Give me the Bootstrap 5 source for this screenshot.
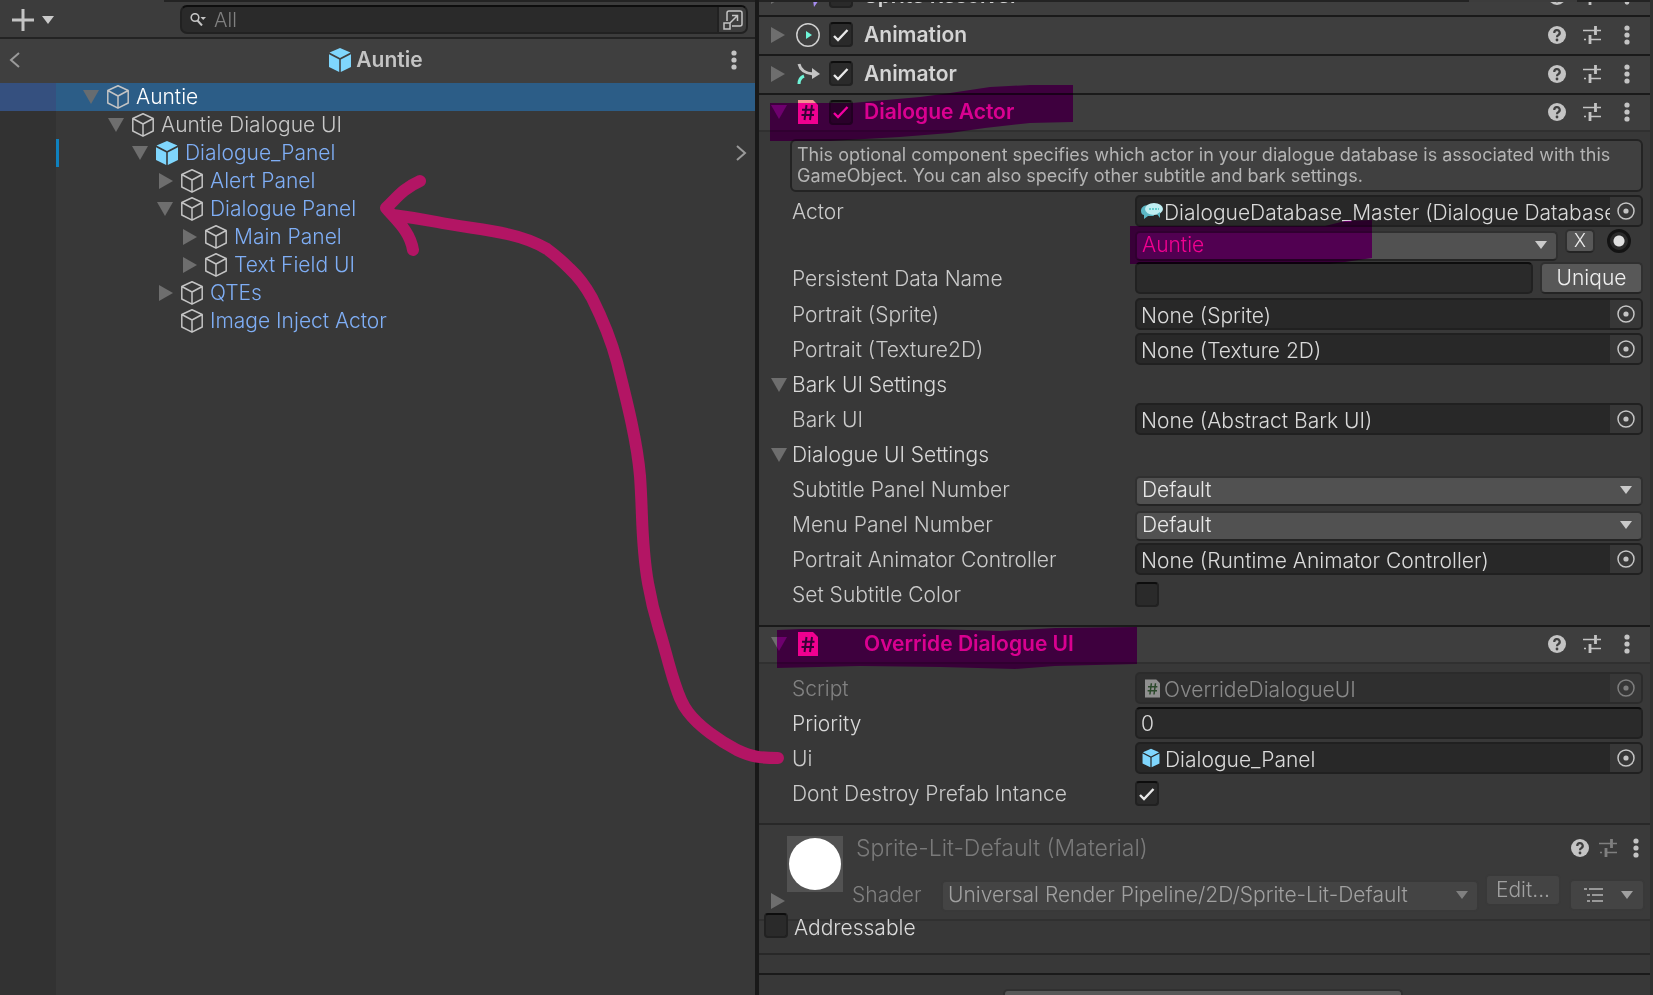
<!DOCTYPE html>
<html lang="en">
<head>
<meta charset="utf-8">
<meta name="viewport" content="width=device-width, initial-scale=1">
<title>Auntie – Inspector</title>
<link href="https://cdn.jsdelivr.net/npm/bootstrap@5.3.0/dist/css/bootstrap.min.css" rel="stylesheet">
<style>
  body { background: #383838; color: #cacaca; font-family: Inter, "Liberation Sans", sans-serif; font-size: 21px; font-weight: 300; line-height: 32px; overflow: hidden; }
  button, input, select { font: inherit; color: inherit; }
  svg { display: block; flex: none; }
  .editor { min-height: 100vh; }
  .hierarchy { flex: 755 1 0; min-width: 0; }
  .inspector { flex: 891 1 0; min-width: 0; border-right: 3px solid #303030; box-sizing: content-box; }
  .splitter { width: 4px; background: #191919; }
  .plain { background: none; border: 0; padding: 0; display: flex; align-items: center; }
  .tabline { height: 2px; background: #232323; }
  .tabline span { background: #3c3c3c; }

  /* hierarchy */
  .toolbar { height: 37px; background: #3c3c3c; border-bottom: 2px solid #232323; padding: 0 7px 0 12px; }
  .toolbar .add { width: 168px; gap: 8px; }
  .searchbox { height: 29px; background: #2a2a2a; border: 2px solid #212121; border-top-color: #0d0d0d; border-radius: 7px; overflow: hidden; }
  .searchbox input { background: none; border: 0; outline: 0; padding: 0; font-size: 20px; line-height: 24px; }
  .searchbox input::placeholder { color: #808080; opacity: 1; }
  .searchbox .expand { width: 29px; height: 100%; background: #3c3c3c; border-left: 2px solid #212121; }
  .crumb { height: 44px; background: #3f3f3f; padding: 0 18px 2px 9px; }
  .crumb h1 { font-size: 21px; font-weight: 600; line-height: 32px; color: #c4c4c4; }
  .tree { background: #383838; }
  .gutter-strip { width: 56px; background: #323232; }
  .gutter-strip div { height: 28px; background: #35507f; }
  .node { height: 28px; line-height: 28px; color: #7faef5; }
  .node a { color: inherit; text-decoration: none; }
  .node .twist { width: 18px; margin-right: 5px; }
  .node .twist svg[width="14"] { margin-left: 2px; }
  .node .cube { margin-right: 6px; }
  .node.selected { background: #2c5d87; color: #fff; }
  .node.scene { color: #c8c8c8; }
  .node.changed { box-shadow: inset 3px 0 #0f81be; }
  .lv0 { padding-left: 27px; } .lv1 { padding-left: 52px; } .lv2 { padding-left: 76px; }
  .lv3 { padding-left: 101px; } .lv4 { padding-left: 125px; }

  /* inspector */
  .comp-head { height: 39px; background: #3e3e3e; border-bottom: 2px solid #1a1a1a; padding: 0 14px 2px 12px; position: relative; }
  .comp-head.open { height: 37px; border-bottom-color: #303030; padding-bottom: 1px; }
  .comp-head h2 { font-size: 21px; font-weight: 600; line-height: 32px; color: #d4d4d4; margin: 0 0 0 11px; }
  .comp-head .fold { width: 25px; }
  .comp-head .kind { width: 24px; margin-right: 9px; }
  .marked h2 { color: #d98090; }
  .actions { gap: 17px; }
  .peek { height: 15px; overflow: hidden; }
  .section { border-bottom: 2px solid #1a1a1a; }
  .helpbox { margin: 7px 7px 3px 31px; padding: 3px 5px; border: 2px solid #232323; border-radius: 6px; background: #404040; font-size: 18px; font-weight: 400; line-height: 21px; height: 53px; color: #b4b4b4; white-space: nowrap; }
  .prop { height: 35px; padding: 0 7px 0 33px; position: relative; display: flex; align-items: flex-start; }
  .prop > label, .prop > .name { width: 343px; flex: none; white-space: nowrap; }
  .prop > label, .prop > .strong { line-height: 34px; }
  .prop .strong { color: #d8d8d8; }
  .prop .fold { width: 16px; height: 34px; margin-left: -21px; margin-right: 5px; }
  .objfield, .textfield { height: 32px; flex: 1 1 0; min-width: 0; background: #282828; border: 2px solid #202020; border-radius: 5px; color: #dadada; overflow: hidden; }
  .objfield input { flex: 1 1 0; min-width: 0; background: none; border: 0; outline: 0; padding: 2px 0 0 4px; line-height: 26px; height: 28px; }
  .objfield input.withicon { padding-left: 1px; }
  .objfield .pick { width: 31px; height: 28px; background: #373737; justify-content: center; }
  .textfield { background: #2a2a2a; border-color: #212121; border-top-color: #0d0d0d; padding: 0 4px; line-height: 28px; outline: 0; }
  .off { opacity: .5; }
  .drop { position: relative; flex: 1 1 0; min-width: 0; margin-top: 1px; }
  .drop select { width: 100%; height: 30px; appearance: none; background: #515151; border: 2px solid #303030; border-bottom-color: #242424; border-radius: 5px; padding: 0 30px 2px 5px; line-height: 24px; color: #e8e8e8; outline: 0; }
  .drop svg { position: absolute; right: 11px; top: 12px; pointer-events: none; }
  .pushbtn { background: #585858; border: 2px solid #303030; border-bottom-color: #242424; border-radius: 5px; color: #eee; padding: 0; text-align: center; }
  .tick { appearance: none; flex: none; width: 24px; height: 25px; margin: 0; background: #2a2a2a; border: 2px solid #212121; border-top-color: #0d0d0d; border-radius: 4px; }
  .tick:checked { background: #2a2a2a url("data:image/svg+xml,%3Csvg xmlns='http://www.w3.org/2000/svg' viewBox='0 0 20 20'%3E%3Cpath d='M3 11l4 4L16.500 5' fill='none' stroke='%23e8e8e8' stroke-width='2.400'/%3E%3C/svg%3E") center / 20px no-repeat; }
  .marked .tick:checked { background-image: url("data:image/svg+xml,%3Csvg xmlns='http://www.w3.org/2000/svg' viewBox='0 0 20 20'%3E%3Cpath d='M3 11l4 4L16.500 5' fill='none' stroke='%23f080a0' stroke-width='2.400'/%3E%3C/svg%3E"); }
  .prop .tick { margin-top: 4px; }
  .dot { appearance: none; width: 24px; height: 24px; margin: 0; border-radius: 50%; border: 3px solid #131313; background: radial-gradient(circle, #e0e0e0 5px, #2a2a2a 6px); }
  .marker { position: absolute; mix-blend-mode: multiply; pointer-events: none; z-index: 2; }
  .material { height: 96px; background: #3a3a3a; border-bottom: 2px solid #303030; padding: 0 5px 0 12px; color: #808080; }
  .material .preview { width: 56px; height: 56px; background: #525252; }
  .material .preview span { width: 52px; height: 52px; background: #fff; border-radius: 50%; }
  .material h2 { font-size: 23px; font-weight: 300; line-height: 32px; margin: 0; color: #7a7a7a; }
  .material .drop select, .material .pushbtn { background: #444; border-color: #393939; color: #a0a0a0; height: 32px; }
  .addr { margin-top: -8px; padding: 0 0 15px 5px; gap: 6px; height: 40px; color: #dadada; position: relative; }
  .addr label { line-height: 30px; }
  .wide { width: 400px; height: 32px; margin: 14px auto 0 244px; display: block; }
  .annotation { position: absolute; left: 0; top: 0; width: 100%; pointer-events: none; z-index: 3; }
</style>
</head>
<body>
<svg width="0" height="0" class="position-absolute" aria-hidden="true">
  <defs>
    <symbol id="cube" viewBox="0 0 24 26"><path d="M12 1.800L22.200 6.500V19L12 24.200L1.800 19V6.500Z M1.800 6.500L12 12L22.200 6.500M12 12V24" fill="none" stroke="#c4c4c4" stroke-width="1.500" stroke-linejoin="round"/></symbol>
    <symbol id="prefab" viewBox="0 0 24 26"><path d="M12 1L22.500 5.600L12 11L1.500 5.600Z M1 7.200L11.200 12.500V25L1 20Z M23 7.200L12.800 12.500V25L23 20Z" fill="#7fd6fd"/></symbol>
    <symbol id="down" viewBox="0 0 16 14"><path d="M0 0H16L8 14Z" fill="#6e6e6e"/></symbol>
    <symbol id="right" viewBox="0 0 14 16"><path d="M0 0L14 8L0 16Z" fill="#6e6e6e"/></symbol>
    <symbol id="caret" viewBox="0 0 12 8"><path d="M0 0H12L6 8Z" fill="currentColor"/></symbol>
    <symbol id="help" viewBox="0 0 18 18"><circle cx="9" cy="9" r="9" fill="#c4c4c4"/><path d="M6.300 7A2.700 2.700 0 1 1 10.500 9Q9 9.800 9 11.200" fill="none" stroke="#3e3e3e" stroke-width="2.200"/><circle cx="9" cy="14" r="1.400" fill="#3e3e3e"/></symbol>
    <symbol id="preset" viewBox="0 0 18 18"><path d="M0 4.500H12M14 4.500H18M1 13.500H3M7 13.500H18" stroke="#c4c4c4" stroke-width="1.400"/><path d="M12.500 0V9M7 9V18" stroke="#c4c4c4" stroke-width="2.800"/></symbol>
    <symbol id="kebab" viewBox="0 0 6 20"><circle cx="3" cy="3" r="2.600" fill="#c4c4c4"/><circle cx="3" cy="10" r="2.600" fill="#c4c4c4"/><circle cx="3" cy="17" r="2.600" fill="#c4c4c4"/></symbol>
    <symbol id="picker" viewBox="0 0 18 18"><circle cx="9" cy="9" r="8" fill="none" stroke="#c4c4c4" stroke-width="1.500"/><circle cx="9" cy="9" r="2.600" fill="#c4c4c4"/></symbol>
    <symbol id="script" viewBox="0 0 20 24"><path d="M0 0H15L20 5V24H0Z" fill="currentColor"/><path d="M8.500 5L6.500 20M14 5L12 20M4 9.700H16.500M3.500 15H16" stroke="var(--hash)" stroke-width="2"/></symbol>
  </defs>
</svg>

<main class="editor d-flex position-relative">
  <section class="hierarchy d-flex flex-column" aria-label="Hierarchy">
    <div class="tabline d-flex"><span style="width:164px"></span></div>
    <div class="toolbar d-flex align-items-center">
      <div class="add d-flex align-items-center">
        <button class="plain" aria-label="Create" style="gap:8px">
          <svg width="22" height="22" viewBox="0 0 22 22"><path d="M11 0V22M0 11H22" stroke="#c4c4c4" stroke-width="3"/></svg>
          <svg width="12" height="8"><use href="#caret"/></svg>
        </button>
      </div>
      <div class="searchbox d-flex align-items-center flex-fill ps-2">
        <svg width="16" height="13" viewBox="0 0 16 13"><circle cx="5" cy="4.500" r="3.800" fill="none" stroke="#c4c4c4" stroke-width="1.600"/><path d="M7.500 7.500L12 12.500" stroke="#c4c4c4" stroke-width="2"/><path d="M10.500 4H16L13.200 7Z" fill="#c4c4c4"/></svg>
        <input class="flex-fill ms-2" type="text" placeholder="All" aria-label="Search hierarchy">
        <button class="plain expand justify-content-center" aria-label="Open search window">
          <svg width="22" height="22" viewBox="0 0 22 22"><path d="M5 12V4Q5 2 7 2H18Q20 2 20 4V15Q20 17 18 17H10" fill="none" stroke="#c4c4c4" stroke-width="1.500"/><path d="M2 14H8V20H2ZM8 14L15 7M10 6.500H15.500V12" fill="none" stroke="#c4c4c4" stroke-width="1.500"/></svg>
        </button>
      </div>
    </div>
    <div class="crumb d-flex align-items-center justify-content-between">
      <button class="plain" aria-label="Back"><svg width="11" height="16" viewBox="0 0 11 16"><path d="M10 1L2 8L10 15" fill="none" stroke="#9a9a9a" stroke-width="2"/></svg></button>
      <h1 class="d-flex align-items-center gap-1 m-0"><svg width="24" height="26"><use href="#prefab"/></svg>Auntie</h1>
      <button class="plain" aria-label="Menu"><svg width="6" height="20"><use href="#kebab"/></svg></button>
    </div>
    <div class="tree d-flex flex-fill">
      <div class="gutter-strip"><div></div></div>
      <div class="flex-fill">
        <div class="node selected lv0 d-flex align-items-center"><span class="twist"><svg width="16" height="14" opacity=".9"><use href="#down"/></svg></span><svg class="cube" width="24" height="26"><use href="#cube"/></svg><a href="#">Auntie</a></div>
        <div class="node scene lv1 d-flex align-items-center"><span class="twist"><svg width="16" height="14"><use href="#down"/></svg></span><svg class="cube" width="24" height="26"><use href="#cube"/></svg><a href="#">Auntie Dialogue UI</a></div>
        <div class="node changed lv2 d-flex align-items-center"><span class="twist"><svg width="16" height="14"><use href="#down"/></svg></span><svg class="cube" width="24" height="26"><use href="#prefab"/></svg><a href="#">Dialogue_Panel</a><svg class="ms-auto me-2" width="11" height="16" viewBox="0 0 11 16"><path d="M1 1L9 8L1 15" fill="none" stroke="#9a9a9a" stroke-width="2"/></svg></div>
        <div class="node lv3 d-flex align-items-center"><span class="twist"><svg width="14" height="16"><use href="#right"/></svg></span><svg class="cube" width="24" height="26"><use href="#cube"/></svg><a href="#">Alert Panel</a></div>
        <div class="node lv3 d-flex align-items-center"><span class="twist"><svg width="16" height="14"><use href="#down"/></svg></span><svg class="cube" width="24" height="26"><use href="#cube"/></svg><a href="#">Dialogue Panel</a></div>
        <div class="node lv4 d-flex align-items-center"><span class="twist"><svg width="14" height="16"><use href="#right"/></svg></span><svg class="cube" width="24" height="26"><use href="#cube"/></svg><a href="#">Main Panel</a></div>
        <div class="node lv4 d-flex align-items-center"><span class="twist"><svg width="14" height="16"><use href="#right"/></svg></span><svg class="cube" width="24" height="26"><use href="#cube"/></svg><a href="#">Text Field UI</a></div>
        <div class="node lv3 d-flex align-items-center"><span class="twist"><svg width="14" height="16"><use href="#right"/></svg></span><svg class="cube" width="24" height="26"><use href="#cube"/></svg><a href="#">QTEs</a></div>
        <div class="node lv3 d-flex align-items-center"><span class="twist"></span><svg class="cube" width="24" height="26"><use href="#cube"/></svg><a href="#">Image Inject Actor</a></div>
      </div>
    </div>
  </section>

  <div class="splitter"></div>

  <section class="inspector" aria-label="Inspector">
    <div class="tabline d-flex justify-content-end"><span style="width:108px;margin-right:73px"></span></div>
    <div class="peek d-flex flex-column justify-content-end">
      <div class="comp-head d-flex align-items-center flex-shrink-0">
        <span class="fold"><svg width="14" height="16"><use href="#right"/></svg></span>
        <svg class="kind" width="24" height="24" viewBox="0 0 24 24"><path d="M2 6H15V1L23 12L18 22V17H2Z" fill="#5a4f86"/><path d="M17 16H23L18 23Z" fill="#a68cf0"/></svg>
        <input class="tick" type="checkbox" aria-label="Enable Sprite Resolver">
        <h2>Sprite Resolver</h2>
        <div class="actions d-flex ms-auto"><svg width="18" height="18"><use href="#help"/></svg><svg width="18" height="18"><use href="#preset"/></svg><svg width="18" height="18"><use href="#kebab"/></svg></div>
      </div>
    </div>
    <div class="comp-head d-flex align-items-center">
      <button class="plain fold" aria-label="Expand Animation"><svg width="14" height="16"><use href="#right"/></svg></button>
      <svg class="kind" width="24" height="24" viewBox="0 0 24 24"><circle cx="12" cy="12" r="11.200" fill="none" stroke="#d0d0d0" stroke-width="1.500"/><path d="M10 8L16 12L10 16Z" fill="#6ff5d8"/></svg>
      <input class="tick" type="checkbox" checked id="e1"><h2><label for="e1">Animation</label></h2>
      <div class="actions d-flex ms-auto"><button class="plain" aria-label="Help"><svg width="18" height="18"><use href="#help"/></svg></button><button class="plain" aria-label="Presets"><svg width="18" height="18"><use href="#preset"/></svg></button><button class="plain" aria-label="Menu"><svg width="18" height="20"><use href="#kebab"/></svg></button></div>
    </div>
    <div class="comp-head d-flex align-items-center">
      <button class="plain fold" aria-label="Expand Animator"><svg width="14" height="16"><use href="#right"/></svg></button>
      <svg class="kind" width="24" height="24" viewBox="0 0 24 24"><path d="M3 2Q5 11 17 12" fill="none" stroke="#c4c4c4" stroke-width="3"/><path d="M16 6L24 12L16 17Z" fill="#c4c4c4"/><path d="M3 22Q3 16 8 14" fill="none" stroke="#6ff5d8" stroke-width="3"/></svg>
      <input class="tick" type="checkbox" checked id="e2"><h2><label for="e2">Animator</label></h2>
      <div class="actions d-flex ms-auto"><button class="plain" aria-label="Help"><svg width="18" height="18"><use href="#help"/></svg></button><button class="plain" aria-label="Presets"><svg width="18" height="18"><use href="#preset"/></svg></button><button class="plain" aria-label="Menu"><svg width="18" height="20"><use href="#kebab"/></svg></button></div>
    </div>

    <div class="section">
      <div class="comp-head open marked d-flex align-items-center">
        <button class="plain fold" aria-label="Collapse Dialogue Actor"><svg width="16" height="14"><use href="#down"/></svg></button>
        <svg class="kind" width="20" height="24" style="color:#f09090;--hash:#383838"><use href="#script"/></svg>
        <input class="tick" type="checkbox" checked id="e3"><h2><label for="e3">Dialogue Actor</label></h2>
        <div class="actions d-flex ms-auto"><button class="plain" aria-label="Help"><svg width="18" height="18"><use href="#help"/></svg></button><button class="plain" aria-label="Presets"><svg width="18" height="18"><use href="#preset"/></svg></button><button class="plain" aria-label="Menu"><svg width="18" height="20"><use href="#kebab"/></svg></button></div>
        <svg class="marker" style="left:11px;top:-10px" width="303" height="56" viewBox="0 0 303 56"><path d="M0 18H82L150 12L180 8L220 2L260 0H303V37L260 38L215 43L180 48L130 52L60 56H0Z" fill="#f0f"/></svg>
      </div>
      <div class="helpbox">This optional component specifies which actor in your dialogue database is associated with this<br>GameObject. You can also specify other subtitle and bark settings.</div>
      <div class="prop" style="height:33px">
        <label for="actor">Actor</label>
        <div class="objfield d-flex align-items-center"><svg class="ms-1" width="22" height="18" viewBox="0 0 22 18"><path d="M8 3C2 3 0 6 0 9C0 12 2 13 3 13L3 17L7 14H13Z" fill="#5bb6c4"/><ellipse cx="13" cy="7" rx="9" ry="6" fill="#bfeef2"/><path d="M16 12L19 16V10Z" fill="#5bb6c4"/><path d="M8 7H18" stroke="#6cc" stroke-width="2" stroke-dasharray="2 1"/></svg><input class="withicon" id="actor" readonly value="DialogueDatabase_Master (Dialogue Database)"><button class="plain pick" aria-label="Pick Actor"><svg width="18" height="18"><use href="#picker"/></svg></button></div>
      </div>
      <div class="prop" style="height:34px">
        <span class="name"></span>
        <div class="drop flex-fill"><select aria-label="Actor name" style="color:#f08090"><option>Auntie</option></select><svg width="12" height="8"><use href="#caret"/></svg></div>
        <button class="pushbtn" style="width:30px;height:24px;margin:1px 0 0 7px;font-size:18px;line-height:20px">X</button>
        <input class="dot" type="radio" checked aria-label="Use database picker" style="margin:1px 12px 0 12px">
        <svg class="marker" style="left:371px;top:-8px" width="242" height="44" viewBox="0 0 242 44"><path d="M0 6H195L215 1L242 0V38L215 42L200 44H0Z" fill="#f0f"/></svg>
      </div>
      <div class="prop" style="height:36px">
        <label for="pdn">Persistent Data Name</label>
        <input class="textfield" id="pdn" type="text"><button class="pushbtn" style="width:103px;height:32px;margin-left:7px;line-height:28px">Unique</button>
      </div>
      <div class="prop"><label for="ps">Portrait (Sprite)</label><div class="objfield d-flex"><input id="ps" readonly value="None (Sprite)"><button class="plain pick" aria-label="Pick sprite"><svg width="18" height="18"><use href="#picker"/></svg></button></div></div>
      <div class="prop"><label for="pt">Portrait (Texture2D)</label><div class="objfield d-flex"><input id="pt" readonly value="None (Texture 2D)"><button class="plain pick" aria-label="Pick texture"><svg width="18" height="18"><use href="#picker"/></svg></button></div></div>
      <div class="prop"><button class="plain fold" aria-label="Collapse Bark UI Settings"><svg width="16" height="14"><use href="#down"/></svg></button><span class="strong">Bark UI Settings</span></div>
      <div class="prop"><label for="bu">Bark UI</label><div class="objfield d-flex"><input id="bu" readonly value="None (Abstract Bark UI)"><button class="plain pick" aria-label="Pick bark UI"><svg width="18" height="18"><use href="#picker"/></svg></button></div></div>
      <div class="prop"><button class="plain fold" aria-label="Collapse Dialogue UI Settings"><svg width="16" height="14"><use href="#down"/></svg></button><span class="strong">Dialogue UI Settings</span></div>
      <div class="prop"><label for="sp">Subtitle Panel Number</label><div class="drop"><select id="sp"><option>Default</option></select><svg width="12" height="8"><use href="#caret"/></svg></div></div>
      <div class="prop"><label for="mp">Menu Panel Number</label><div class="drop"><select id="mp"><option>Default</option></select><svg width="12" height="8"><use href="#caret"/></svg></div></div>
      <div class="prop"><label for="pac">Portrait Animator Controller</label><div class="objfield d-flex"><input id="pac" readonly value="None (Runtime Animator Controller)"><button class="plain pick" aria-label="Pick controller"><svg width="18" height="18"><use href="#picker"/></svg></button></div></div>
      <div class="prop"><label for="ssc">Set Subtitle Color</label><input class="tick" type="checkbox" id="ssc"></div>
      <div style="height:12px"></div>
    </div>

    <div class="section" style="border-color:#282828">
      <div class="comp-head open marked d-flex align-items-center">
        <button class="plain fold" aria-label="Collapse Override Dialogue UI"><svg width="16" height="14"><use href="#down"/></svg></button>
        <svg class="kind" width="20" height="24" style="color:#f09090;--hash:#383838"><use href="#script"/></svg>
        <h2 style="margin-left:35px">Override Dialogue UI</h2>
        <div class="actions d-flex ms-auto"><button class="plain" aria-label="Help"><svg width="18" height="18"><use href="#help"/></svg></button><button class="plain" aria-label="Presets"><svg width="18" height="18"><use href="#preset"/></svg></button><button class="plain" aria-label="Menu"><svg width="18" height="20"><use href="#kebab"/></svg></button></div>
        <svg class="marker" style="left:18px;top:0" width="360" height="42" viewBox="0 0 360 42"><path d="M0 3L23 2H158L223 4L278 1L360 0V37L278 39L238 42L163 40L83 39L0 41Z" fill="#f0f"/></svg>
      </div>
      <div style="height:8px"></div>
      <div class="prop off"><label for="scr">Script</label><div class="objfield d-flex align-items-center"><svg class="ms-2" width="15" height="19" style="color:#e8e8e8;--hash:#1f5a1f"><use href="#script"/></svg><input id="scr" readonly value="OverrideDialogueUI"><button class="plain pick" aria-label="Pick script"><svg width="18" height="18"><use href="#picker"/></svg></button></div></div>
      <div class="prop"><label for="pri" class="strong">Priority</label><input class="textfield" id="pri" type="text" value="0"></div>
      <div class="prop"><label for="ui">Ui</label><div class="objfield d-flex align-items-center"><svg class="ms-1" width="20" height="20" viewBox="0 0 24 26"><use href="#prefab"/></svg><input id="ui" readonly value="Dialogue_Panel"><button class="plain pick" aria-label="Pick UI"><svg width="18" height="18"><use href="#picker"/></svg></button></div></div>
      <div class="prop"><label for="ddp">Dont Destroy Prefab Intance</label><input class="tick" type="checkbox" checked id="ddp"></div>
      <div style="height:11px"></div>
    </div>

    <div class="material d-flex">
      <button class="plain align-items-end" aria-label="Expand material" style="width:16px;padding-bottom:10px"><svg width="14" height="16"><use href="#right"/></svg></button>
      <div class="preview d-flex align-items-center justify-content-center" style="margin-top:11px"><span></span></div>
      <div class="flex-fill ps-2">
        <div class="d-flex align-items-center" style="height:54px;padding:0 0 8px 5px">
          <h2>Sprite-Lit-Default (Material)</h2>
          <div class="d-flex ms-auto" style="gap:10px"><button class="plain" aria-label="Help"><svg width="18" height="18"><use href="#help"/></svg></button><button class="plain" aria-label="Presets" disabled style="opacity:.5"><svg width="18" height="18"><use href="#preset"/></svg></button><button class="plain" aria-label="Menu"><svg width="18" height="20"><use href="#kebab"/></svg></button></div>
        </div>
        <div class="d-flex align-items-start">
          <label for="sh" style="width:90px;padding:0 0 0 1px">Shader</label>
          <div class="drop" style="margin-top:0"><select id="sh" disabled><option>Universal Render Pipeline/2D/Sprite-Lit-Default</option></select><svg width="12" height="8"><use href="#caret"/></svg></div>
          <button class="pushbtn" disabled style="width:76px;margin:-5px 8px 0 6px;line-height:28px">Edit...</button>
          <button class="pushbtn d-flex align-items-center justify-content-between" disabled aria-label="View" style="width:76px;padding:0 10px 0 13px"><svg width="20" height="16" viewBox="0 0 20 16"><path d="M0 2H3M5 2H19M3 8H6M8 8H19M3 14H6M8 14H19" stroke="#999" stroke-width="2"/></svg><svg width="12" height="8"><use href="#caret"/></svg></button>
        </div>
      </div>
    </div>
    <div class="addr d-flex align-items-start"><input class="tick" type="checkbox" id="ad"><label for="ad">Addressable</label></div>
    <div style="height:22px;border:solid;border-width:2px 0;border-color:#282828 transparent #1a1a1a"></div>
    <button class="pushbtn wide" aria-label="Add Component"></button>
  </section>

  <svg class="annotation" viewBox="0 0 1653 995" preserveAspectRatio="none" aria-hidden="true"><path d="M778 758C760 758 752 757 737 750Q722 742 710 733C702 727 694 720 688 712C680 702 677 690 673 678C668 662 664 645 659 629Q652 606 648 583C641 543 643 518 640 476C637 440 626 398 617 362Q609 332 592 298Q582 280 570 269Q558 257 547 249Q530 239 507 234C487 229 461 227 437 222Q416 218 393 215M420 181C402 189 396 199 386 208C396 220 410 231 413 250" fill="none" stroke="#b31564" stroke-width="12" stroke-linecap="round" stroke-linejoin="round"/></svg>
</main>
<script src="https://cdn.jsdelivr.net/npm/bootstrap@5.3.0/dist/js/bootstrap.bundle.min.js"></script>
</body>
</html>
